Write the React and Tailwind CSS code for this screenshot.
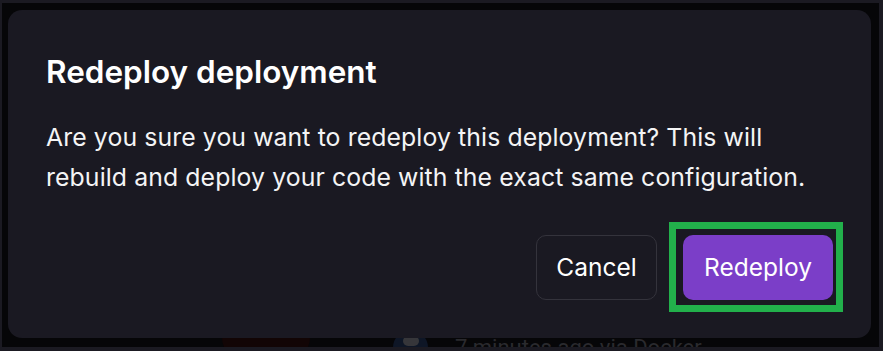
export default function App() {
  return (
    <div className="w-[883px] h-[351px] overflow-hidden bg-[#1b1a22] pt-[3px] pl-[2px] pr-[4px] pb-[4px]" style={{ fontFamily: 'Inter, "Noto Sans", sans-serif' }}>
      <div className="h-full overflow-hidden bg-[#060608] pl-[6px] pr-[4px] pt-[7px]">
        <div className="relative z-10 w-[863px] h-[328px] rounded-[14px] bg-[#1a1922] pl-[38px] pr-[38px] pt-[44px] flex flex-col">
          <h2 className="text-[31.5px] leading-[36px] font-semibold text-white">Redeploy deployment</h2>
          <p className="mt-[27px] text-[24.8px] leading-[40px] text-[#f4f4f5] tracking-[0.1px]">
            Are you sure you want to redeploy this deployment? This will rebuild and deploy your code with the exact same configuration.
          </p>
          <div className="mt-auto mb-[26px] flex justify-end items-center gap-[12px]">
            <button className="w-[121px] h-[65px] rounded-[10px] border border-[#34333c] text-[24.5px] text-white">Cancel</button>
            <div className="-mr-[10px] border-[7px] border-[#22b04b] pl-[7px] pr-[3px] pt-[6px] pb-[5px]">
              <button className="block w-[150px] h-[65px] rounded-[10px] bg-[#7b3ec8] text-[24.5px] text-white">Redeploy</button>
            </div>
          </div>
        </div>
        <div className="flex items-start h-[20px] pl-[214px]">
          <div className="w-[88px] h-[40px] -mt-[20px] rounded-full bg-[#120505]" />
          <div className="ml-[83px] mt-[-8px] w-[35px] h-[35px] rounded-full bg-[#0e1626] flex justify-center pt-[6px]">
            <div className="w-[16px] h-[10px] rounded-full bg-[#36363a]" />
          </div>
          <span className="ml-[27px] -mt-[3px] text-[22px] leading-[26px] text-[#2a2a2e]" style={{ fontFamily: 'Roboto, sans-serif' }}>7 minutes ago via Docker</span>
        </div>
      </div>
    </div>
  )
}
